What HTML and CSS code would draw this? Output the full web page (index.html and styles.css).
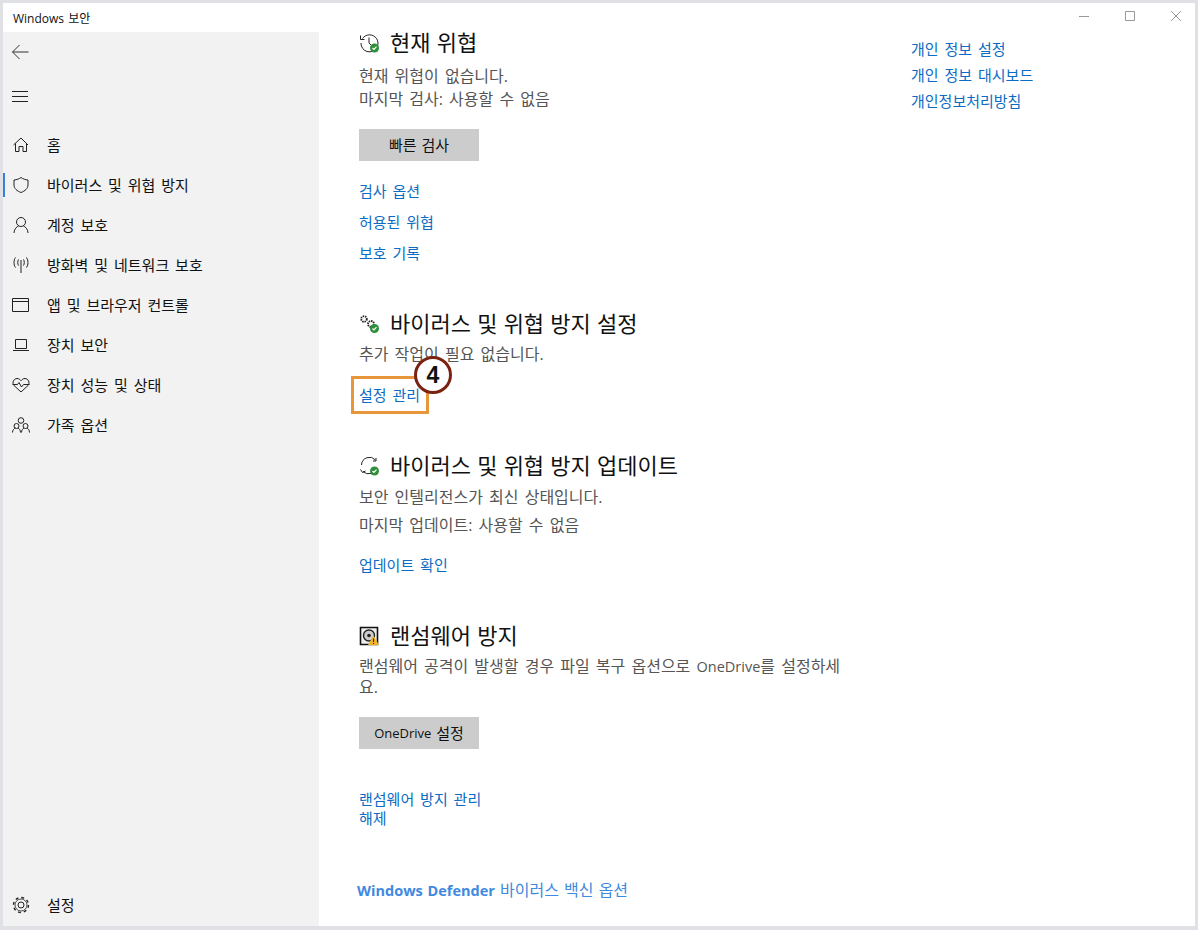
FILE: index.html
```html
<!DOCTYPE html>
<html>
<head lang="ko">
    <meta charset="UTF-8">
    <title>Windows 보안</title>
    <link rel="stylesheet" href="styles.css">
</head>
<body>
<div class="window">
    <div class="titlebar">
        <span class="title">Windows 보안</span>
        <div class="controls">
            <svg width="10" height="10" viewBox="0 0 10 10"><path d="M0 5.500h10" stroke="#999" fill="none"/></svg>
            <svg width="10" height="10" viewBox="0 0 10 10"><path d="M.5.500h9v9h-9z" stroke="#999" fill="none"/></svg>
            <svg width="10" height="10" viewBox="0 0 10 10"><path d="M0 0l10 10M10 0L0 10" stroke="#999" fill="none"/></svg>
        </div>
    </div>
    <div class="body">
        <div class="sidebar">
            <div class="tool">
                <svg width="18" height="18" viewBox="0 0 18 18"><path d="M17.500 9H1.500M8.500 2L1.500 9l7 7" stroke="#333" fill="none"/></svg>
            </div>
            <div class="tool menu">
                <svg width="18" height="18" viewBox="0 0 18 18"><path d="M1 4.500h16M1 9.500h16M1 14.500h16" stroke="#222" fill="none"/></svg>
            </div>
            <ul class="nav">
                <li>
                    <svg width="18" height="18" viewBox="0 0 18 18"><path d="M1.500 9L9 2l7 7M3.500 7.500v8h3.500v-5h4v5h3.500v-8" stroke="#222" fill="none"/></svg>
                    <span>홈</span>
                </li>
                <li class="active">
                    <svg width="18" height="18" viewBox="0 0 18 18"><path d="M9 1.500c2 1.500 4.500 2.300 7 2.500v5c0 3.500-3 6-7 7.500-4-1.500-7-4-7-7.500V4c2.500-.2 5-1 7-2.500z" stroke="#222" fill="none"/></svg>
                    <span>바이러스 및 위협 방지</span>
                </li>
                <li>
                    <svg width="18" height="18" viewBox="0 0 18 18"><circle cx="9" cy="6" r="4.500" stroke="#222" fill="none"/><path d="M2 17c0-4 3-6.500 4.500-7M16 17c0-4-3-6.500-4.500-7" stroke="#222" fill="none"/></svg>
                    <span>계정 보호</span>
                </li>
                <li>
                    <svg width="18" height="18" viewBox="0 0 18 18"><path d="M9 4v13M6.500 3.500C5.500 5 5.500 8 6.500 9.500M11.500 3.500c1 1.500 1 4.500 0 6M3.500 1.500C1.500 4 1.500 9 3.500 11.500M14.500 1.500c2 2.500 2 7.500 0 10" stroke="#222" fill="none"/></svg>
                    <span>방화벽 및 네트워크 보호</span>
                </li>
                <li>
                    <svg width="18" height="18" viewBox="0 0 18 18"><path d="M.5 2.500h16v13H.5zM.5 5.500h16" stroke="#222" fill="none"/></svg>
                    <span>앱 및 브라우저 컨트롤</span>
                </li>
                <li>
                    <svg width="18" height="18" viewBox="0 0 18 18"><path d="M3.500 3.500h11v9h-11zM1 14.500h16" stroke="#222" fill="none"/></svg>
                    <span>장치 보안</span>
                </li>
                <li>
                    <svg width="18" height="18" viewBox="0 0 18 18"><path d="M9 16L2 9.500C-.5 6.500 2 2.500 5 2.500c1.800 0 3 1 4 2.200 1-1.200 2.200-2.200 4-2.200 3 0 5.500 4 3 7L9 16z" stroke="#222" fill="none"/><path d="M.5 8.500h5l1.500-2 2.500 4.500 2-2.500h6" stroke="#222" fill="none"/></svg>
                    <span>장치 성능 및 상태</span>
                </li>
                <li>
                    <svg width="18" height="18" viewBox="0 0 18 18"><circle cx="9" cy="4.500" r="2.800" stroke="#222" fill="none"/><circle cx="4.500" cy="10" r="2.500" stroke="#222" fill="none"/><circle cx="13.500" cy="10" r="2.500" stroke="#222" fill="none"/><path d="M.5 16.500c0-2.500 1.500-4 3-4.500M8.500 16.500c0-2.500-1.500-4-2.500-4.500M9.500 16.500c0-2.500 1.500-4 2.500-4.500M17.500 16.500c0-2.500-1.500-4-2.500-4.500" stroke="#222" fill="none"/></svg>
                    <span>가족 옵션</span>
                </li>
            </ul>
            <div class="nav-bottom">
                <svg width="18" height="18" viewBox="0 0 18 18"><circle cx="9" cy="9" r="3" stroke="#222" fill="none"/><circle cx="9" cy="9" r="6" stroke="#222" stroke-width=".8" fill="none"/><circle cx="9" cy="9" r="7.500" stroke="#222" stroke-width="1.400" stroke-dasharray="2.900 3" fill="none"/></svg>
                <span>설정</span>
            </div>
        </div>
        <div class="main">
            <div class="content">
                <div class="section first">
                    <h2>
                        <svg width="22" height="22" viewBox="0 0 22 22"><path d="M3.500 6.500A8.500 8.500 0 1 1 2 11M1.500 3.500v4h4M10 5.500V11l3 3" stroke="#222" fill="none"/><circle cx="15.500" cy="16" r="4.500" fill="#2f8f3b"/><path d="M13.500 16l1.500 1.500 2.500-2.800" stroke="#fff" stroke-width="1.200" fill="none"/></svg>
                        <span>현재 위협</span>
                    </h2>
                    <p class="line-a">현재 위협이 없습니다.</p>
                    <p class="line-b">마지막 검사: 사용할 수 없음</p>
                    <a class="btn" href="#">빠른 검사</a>
                    <a class="link link-first" href="#">검사 옵션</a>
                    <a class="link" href="#">허용된 위협</a>
                    <a class="link" href="#">보호 기록</a>
                </div>
                <div class="section settings">
                    <h2>
                        <svg width="22" height="22" viewBox="0 0 22 22"><circle cx="5" cy="6" r="2.800" stroke="#222" stroke-width="1.800" stroke-dasharray="1.500 .8" fill="none"/><circle cx="12" cy="11" r="3" stroke="#222" stroke-width="1.800" stroke-dasharray="1.500 .8" fill="none"/><circle cx="15.500" cy="15.500" r="4.500" fill="#2f8f3b"/><path d="M13.500 15.500l1.500 1.500 2.500-2.800" stroke="#fff" stroke-width="1.200" fill="none"/></svg>
                        <span>바이러스 및 위협 방지 설정</span>
                    </h2>
                    <p class="line-a">추가 작업이 필요 없습니다.</p>
                    <div class="marked">
                        <a class="link" href="#">설정 관리</a>
                        <span class="callout"></span>
                        <span class="badge">4</span>
                    </div>
                </div>
                <div class="section update">
                    <h2>
                        <svg width="22" height="22" viewBox="0 0 22 22"><path d="M2.500 10A8 8 0 0 1 16.500 5M17 3v3h-3M17.500 12A8 8 0 0 1 4 16.500M1.500 14.500l2 3 3-1.500" stroke="#222" fill="none"/><circle cx="15.500" cy="16" r="4.500" fill="#2f8f3b"/><path d="M13.500 16l1.500 1.500 2.500-2.800" stroke="#fff" stroke-width="1.200" fill="none"/></svg>
                        <span>바이러스 및 위협 방지 업데이트</span>
                    </h2>
                    <p class="line-a">보안 인텔리전스가 최신 상태입니다.</p>
                    <p class="line-c">마지막 업데이트: 사용할 수 없음</p>
                    <a class="link link-update" href="#">업데이트 확인</a>
                </div>
                <div class="section ransom">
                    <h2>
                        <svg width="22" height="22" viewBox="0 0 22 22"><path d="M1.500 2.500h17v17h-17z" stroke="#111" stroke-width="1.600" fill="#eee"/><circle cx="10" cy="10.500" r="5.500" stroke="#222" stroke-width="1.400" fill="#ccc"/><circle cx="10" cy="10.500" r="1.800" fill="#222"/><path d="M14.500 10.500l5.500 9.500H9z" fill="#f0b429"/><path d="M14.500 13.500v3.500M14.500 18v1" stroke="#222" fill="none"/></svg>
                        <span>랜섬웨어 방지</span>
                    </h2>
                    <p class="line-a wrap">랜섬웨어 공격이 발생할 경우 파일 복구 옵션으로 <span class="latin-text">OneDrive</span>를 설정하세요.</p>
                    <a class="btn btn-ransom" href="#"><span class="latin">OneDrive</span>&nbsp;설정</a>
                    <a class="link link-stack" href="#">랜섬웨어 방지 관리</a>
                    <a class="link link-tight" href="#">해제</a>
                </div>
                <a class="defender" href="#"><span class="latin-bold">Windows Defender</span> 바이러스 백신 옵션</a>
            </div>
            <div class="aside">
                <a class="link" href="#">개인 정보 설정</a>
                <a class="link" href="#">개인 정보 대시보드</a>
                <a class="link" href="#">개인정보처리방침</a>
            </div>
        </div>
    </div>
</div>
</body>
</html>
```

FILE: styles.css
```css
* {
    margin: 0;
    padding: 0;
    list-style: none;
    box-sizing: border-box;
}

body {
    background-color: #dfe1e4;
    font-family: "Open Sans", "Noto Sans CJK KR", sans-serif;
    font-size: 15px;
    word-spacing: 2px;
    color: #222;
}

.window {
    width: 1198px;
    height: 930px;
    padding: 3px 3px 4px 3px;
    display: flex;
    flex-direction: column;
}

.titlebar {
    height: 29px;
    background-color: #fff;
    display: flex;
    align-items: center;
    justify-content: space-between;
    padding-left: 10px;
    flex-shrink: 0;
}

.title {
    font-size: 12px;
    word-spacing: 1px;
    color: #111;
}

.controls {
    display: flex;
    gap: 36px;
    padding-right: 14px;
    margin-top: -3px;
}

.body {
    flex: 1;
    display: flex;
    min-height: 0;
}

.sidebar {
    width: 316px;
    background-color: #f2f2f2;
    display: flex;
    flex-direction: column;
    flex-shrink: 0;
}

.tool {
    height: 40px;
    padding-left: 8px;
    display: flex;
    align-items: center;
}

.menu {
    margin-top: 4px;
}

.nav {
    margin-top: 9px;
}

.nav li,
.nav-bottom {
    height: 40px;
    padding-left: 9px;
    display: flex;
    align-items: center;
    gap: 17px;
    color: #111;
    position: relative;
}

.nav li span,
.nav-bottom span {
    padding-bottom: 2px;
}

.nav-bottom {
    margin-top: auto;
    margin-bottom: 1px;
}

.active::before {
    content: "";
    position: absolute;
    left: 0;
    top: 8px;
    width: 2px;
    height: 24px;
    background-color: #3b7fd8;
}

.main {
    flex: 1;
    background-color: #fff;
    padding-left: 40px;
    display: flex;
    overflow: hidden;
}

.content {
    width: 552px;
}

.aside {
    padding-top: 7px;
    display: flex;
    flex-direction: column;
    gap: 6px;
}

h2 {
    font-size: 22px;
    font-weight: 400;
    line-height: 28px;
    word-spacing: .5px;
    color: #111;
    display: flex;
    align-items: center;
    gap: 9px;
}

h2 span {
    line-height: 26px;
    padding-bottom: 2px;
}

h2 svg {
    flex-shrink: 0;
}

.first h2 {
    height: 22px;
}

.first h2 span {
    line-height: 22px;
}

.section p {
    font-size: 16px;
    line-height: 20px;
    color: #555;
}

.latin {
    font-size: 13px;
}

.latin-text {
    font-size: 14.500px;
}

.latin-bold {
    font-size: 14.500px;
    font-weight: 700;
}

.line-a {
    margin-top: 6px;
}

.first .line-a {
    margin-top: 12px;
}

.update .line-a {
    margin-top: 7px;
}

.line-b {
    margin-top: 3px;
}

.line-c {
    margin-top: 8px;
}

.wrap {
    width: 486px;
}

a {
    text-decoration: none;
}

.btn {
    display: flex;
    align-items: center;
    justify-content: center;
    width: 120px;
    height: 32px;
    background-color: #ccc;
    color: #111;
    margin-top: 20px;
    word-spacing: 1px;
    padding-bottom: 1px;
}

.link {
    display: block;
    color: #0b6cc4;
    line-height: 20px;
    width: fit-content;
}

.section > .link {
    margin-top: 11px;
}

.section > .link-first {
    margin-top: 20px;
}

.settings {
    margin-top: 47px;
}

.marked {
    margin-top: 21px;
    position: relative;
    width: fit-content;
}

.callout {
    position: absolute;
    left: -8px;
    top: -9px;
    width: 78px;
    height: 38px;
    border: 3px solid #e8963a;
}

.badge {
    position: absolute;
    left: 55px;
    top: -29px;
    width: 38px;
    height: 38px;
    border: 3px solid #7a2313;
    border-radius: 50%;
    background-color: #fff;
    display: flex;
    align-items: center;
    justify-content: center;
    font-size: 23px;
    font-weight: 700;
    color: #111;
    font-family: "Liberation Sans", sans-serif;
}

.update {
    margin-top: 47px;
}

.section > .link-update {
    margin-top: 20px;
}

.ransom {
    margin-top: 47px;
}

.btn-ransom {
    margin-top: 20px;
}

.section > .link-stack {
    margin-top: 40px;
}

.section > .link-tight {
    margin-top: -1px;
}

.defender {
    display: block;
    margin-top: 52px;
    margin-left: -2px;
    font-size: 16px;
    word-spacing: 1px;
    color: #4189de;
    line-height: 20px;
}
```
